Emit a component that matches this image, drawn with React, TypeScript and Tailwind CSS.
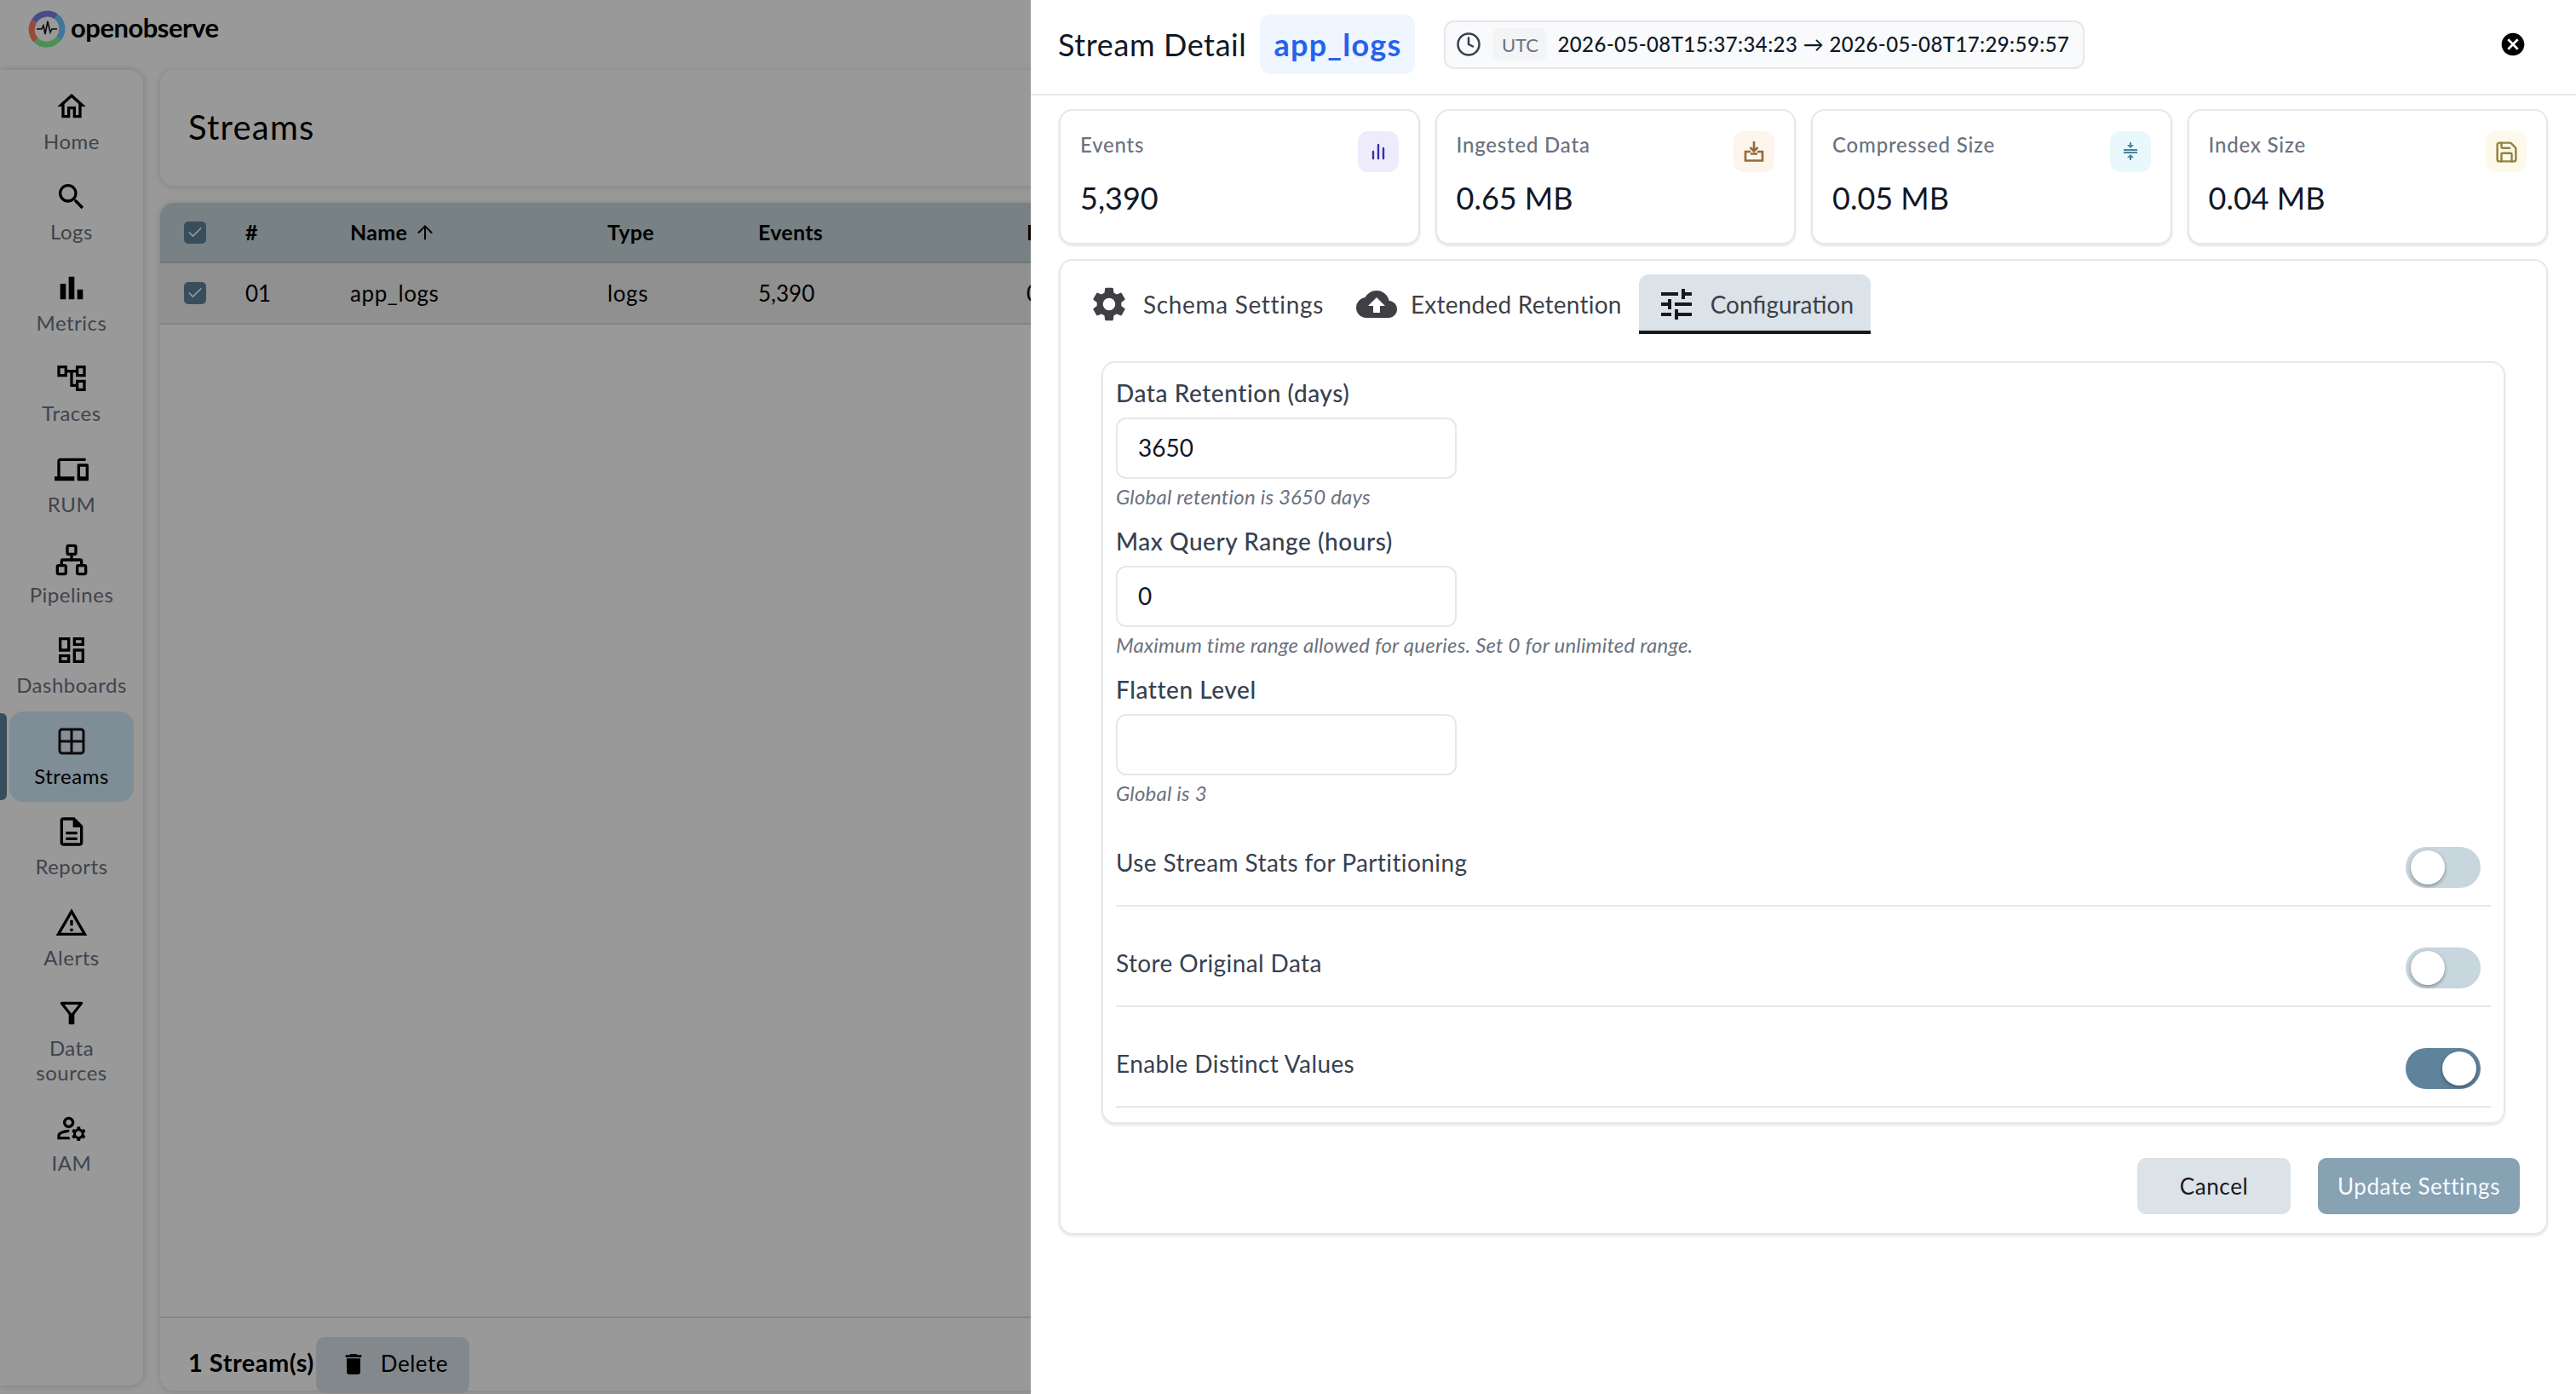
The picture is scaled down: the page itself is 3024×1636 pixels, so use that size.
import { ArrowUp, Check, Clock, Network, Save } from 'lucide-react'
import {
  MdBarChart,
  MdCancel,
  MdCloudUpload,
  MdCompress,
  MdDelete,
  MdOutlineAccountTree,
  MdOutlineDashboard,
  MdOutlineDescription,
  MdOutlineDevices,
  MdOutlineFilterAlt,
  MdOutlineHome,
  MdOutlineManageAccounts,
  MdOutlineWarningAmber,
  MdSearch,
  MdSettings,
  MdTune,
} from 'react-icons/md'
import type { ReactNode } from 'react'

function Logo() {
  return (
    <svg width="44" height="44" viewBox="0 0 44 44" fill="none">
      <circle cx="22" cy="22" r="20" fill="#fff" />
      <path d="M7 13 A18 18 0 0 1 33 7.5" stroke="#7a7de3" strokeWidth="7" />
      <path d="M33 7.5 A18 18 0 0 1 36 33" stroke="#69c6ff" strokeWidth="7" />
      <path d="M36 33 A18 18 0 0 1 9 35" stroke="#80ee8e" strokeWidth="7" />
      <path d="M9 35 A18 18 0 0 1 7 13" stroke="#ff7b63" strokeWidth="7" />
      <path d="M10 22h6l2-4 2 10 3-15 3 13 2-4h6" stroke="#111" strokeWidth="1.6" />
    </svg>
  )
}

function StreamsIcon() {
  return (
    <svg width="40" height="40" viewBox="0 0 40 40" fill="none">
      <rect x="6" y="6" width="28" height="28" rx="3" fill="#e5edff" stroke="#111" strokeWidth="3" />
      <path d="M20 6v28M6 20h28" stroke="#111" strokeWidth="3" />
    </svg>
  )
}

function TrayIcon() {
  return (
    <svg width="24" height="24" viewBox="0 0 24 24" fill="none" stroke="#94693d" strokeWidth="2.6">
      <path d="M12 0v11M7.5 7l4.5 4.5L16.5 7" />
      <path d="M8 12H2v10.5h20V12h-6M8 14.5h8" />
    </svg>
  )
}

function BarsIcon() {
  return (
    <svg width="16" height="20" viewBox="0 0 16 20" fill="none" stroke="#3730a3" strokeWidth="2.4" strokeLinecap="round">
      <path d="M2 18v-8M8 18V2M14 18V6" />
    </svg>
  )
}

const navItems: { label: ReactNode; icon: ReactNode; active?: boolean; tall?: boolean }[] = [
  { label: 'Home', icon: <MdOutlineHome size={40} /> },
  { label: 'Logs', icon: <MdSearch size={40} /> },
  { label: 'Metrics', icon: <MdBarChart size={40} /> },
  { label: 'Traces', icon: <MdOutlineAccountTree size={40} /> },
  { label: 'RUM', icon: <MdOutlineDevices size={40} /> },
  { label: 'Pipelines', icon: <Network size={40} strokeWidth={2} /> },
  { label: 'Dashboards', icon: <MdOutlineDashboard size={40} /> },
  { label: 'Streams', icon: <StreamsIcon />, active: true },
  { label: 'Reports', icon: <MdOutlineDescription size={40} /> },
  { label: 'Alerts', icon: <MdOutlineWarningAmber size={40} /> },
  { label: <>Data<br />sources</>, icon: <MdOutlineFilterAlt size={40} />, tall: true },
  { label: 'IAM', icon: <MdOutlineManageAccounts size={40} /> },
]

const stats = [
  { label: 'Events', value: '5,390', tile: 'bg-[#eeebfd]', icon: <BarsIcon /> },
  { label: 'Ingested Data', value: '0.65 MB', tile: 'bg-[#fdf5eb]', icon: <TrayIcon /> },
  { label: 'Compressed Size', value: '0.05 MB', tile: 'bg-[#e9f8fd]', icon: <MdCompress size={24} color="#4b8498" /> },
  { label: 'Index Size', value: '0.04 MB', tile: 'bg-[#fdfaeb]', icon: <Save size={29} color="#94803f" strokeWidth={2} /> },
]

const fields = [
  { label: 'Data Retention (days)', value: '3650', hint: 'Global retention is 3650 days' },
  { label: 'Max Query Range (hours)', value: '0', hint: 'Maximum time range allowed for queries. Set 0 for unlimited range.' },
  { label: 'Flatten Level', value: '', hint: 'Global is 3' },
]

const toggles = [
  { label: 'Use Stream Stats for Partitioning', on: false },
  { label: 'Store Original Data', on: false },
  { label: 'Enable Distinct Values', on: true },
]

function Checkbox() {
  return (
    <div className="flex h-[26px] w-[26px] items-center justify-center rounded-[5px] bg-[#5f839b]">
      <Check size={20} color="#fff" strokeWidth={2} />
    </div>
  )
}

function Toggle({ on }: { on: boolean }) {
  return (
    <div
      className={
        on
          ? 'flex h-[48px] w-[88px] items-center justify-end rounded-full bg-[#5f839b] px-[5px]'
          : 'flex h-[48px] w-[88px] items-center justify-start rounded-full bg-[#c8d6dd] px-[6px]'
      }
    >
      <div className="h-[40px] w-[40px] rounded-full bg-white shadow-[0_2px_4px_rgba(0,0,0,0.35)]" />
    </div>
  )
}

export default function App() {
  return (
    <div className="relative h-[1636px] w-[3024px] overflow-hidden bg-white font-['Lato',sans-serif] tracking-[0.5px] text-black">
      {/* page behind the drawer */}
      <div className="flex h-[82px] items-start pl-[33px] pt-[12px]">
        <Logo />
        <span className="ml-[6px] text-[31px] font-bold leading-[40px] tracking-[-0.5px]">openobserve</span>
      </div>

      <div className="flex items-start">
        <nav className="h-[1544px] w-[168px] shrink-0 rounded-r-2xl bg-white pt-[8px] shadow-[0_0_10px_rgba(0,0,0,0.2)]">
          {navItems.map((item, i) => (
            <div
              key={i}
              className={
                item.active
                  ? 'relative mx-[11px] flex h-[106.4px] flex-col items-center rounded-2xl bg-[#d2ecfa] pt-[15px] text-black'
                  : item.tall
                    ? 'mx-[11px] flex h-[135.4px] flex-col items-center pt-[15px] text-[#6b7280]'
                    : 'mx-[11px] flex h-[106.4px] flex-col items-center pt-[15px] text-[#6b7280]'
              }
            >
              {item.active && <div className="absolute bottom-[2px] left-[-11px] top-[2px] w-[8px] rounded-r-md bg-[#5f839b]" />}
              <div className="flex h-[40px] w-[40px] items-center justify-center text-black">{item.icon}</div>
              <div className="mt-[6px] whitespace-nowrap text-center text-[24px] leading-[29px]">{item.label}</div>
            </div>
          ))}
        </nav>

        <main className="ml-[20px] mr-[20px] flex h-[1550px] flex-1 flex-col gap-[20px]">
          <div className="h-[136px] rounded-2xl bg-white px-[33px] pt-[43px] text-[40px] leading-[48px] tracking-[1.2px] shadow-[0_1px_8px_rgba(0,0,0,0.15)]">
            Streams
          </div>
          <div className="flex flex-1 flex-col rounded-2xl bg-white shadow-[0_1px_8px_rgba(0,0,0,0.15)]">
            <div className="grid h-[71px] grid-cols-[72px_123px_302px_177px_315px_auto] items-center rounded-t-2xl border-b-2 border-[#b8c5cb] bg-[#c8d7dc] pl-[28px] text-[25px] font-bold tracking-[0.3px]">
              <Checkbox />
              <span>#</span>
              <span className="flex items-center gap-[8px]">Name <ArrowUp size={26} strokeWidth={1.8} /></span>
              <span>Type</span>
              <span>Events</span>
              <span>Ingested Data</span>
            </div>
            <div className="grid h-[72px] grid-cols-[72px_123px_302px_177px_315px_auto] items-center border-b-2 border-[#dcdcdc] bg-[#f0f0f0] pl-[28px] text-[26px] tracking-normal">
              <Checkbox />
              <span>01</span>
              <span className="tracking-[0.6px]">app_logs</span>
              <span className="tracking-[0.6px]">logs</span>
              <span>5,390</span>
              <span>0.65 MB</span>
            </div>
            <div className="flex-1" />
            <div className="flex h-[87px] items-start border-t-2 border-[#e0e0e0] pl-[33px] pt-[22px]">
              <span className="mt-[12px] text-[29px] font-bold leading-[36px]">1 Stream(s)</span>
              <div className="ml-[2px] flex h-[66px] w-[180px] items-center rounded-[10px] bg-[#d9e3ea] pb-[3px] pl-[28px] text-[26px]">
                <MdDelete size={32} />
                <span className="ml-[16px]">Delete</span>
              </div>
            </div>
          </div>
        </main>
      </div>

      {/* dimmed backdrop and drawer */}
      <div className="absolute inset-0 bg-black/40" />
      <aside className="absolute bottom-0 right-0 top-0 flex w-[1814px] flex-col bg-white">
        <header className="flex h-[112px] shrink-0 items-center border-b-2 border-[#e5e7eb] pb-[6px] pl-[32px] pr-[58px]">
          <span className="text-[36px] leading-[44px] tracking-[0.6px] text-[#111827]">Stream Detail</span>
          <span className="ml-[16px] flex h-[70px] w-[182px] items-center justify-center rounded-xl bg-[#eff6ff] text-[36px] font-bold tracking-[1.2px] text-[#2563eb]">
            app_logs
          </span>
          <div className="ml-[34px] flex h-[57px] w-[752px] items-center rounded-xl border-2 border-[#e5e7eb] bg-[#f9fafb] pl-[12px]">
            <Clock size={30} color="#374151" strokeWidth={2} />
            <span className="ml-[13px] flex h-[38px] w-[64px] items-center justify-center rounded-lg bg-[#f3f4f6] text-[22px] tracking-normal text-[#6b7280]">
              UTC
            </span>
            <span className="ml-[12px] whitespace-nowrap text-[24px] font-medium tracking-[0.4px] text-[#111827]">
              2026-05-08T15:37:34:23 → 2026-05-08T17:29:59:57
            </span>
          </div>
          <MdCancel size={32} className="ml-auto" />
        </header>

        <div className="px-[33px] pt-[16px]">
          <div className="grid grid-cols-4 gap-[18px]">
            {stats.map(stat => (
              <div
                key={stat.label}
                className="h-[159px] rounded-2xl border-2 border-[#e5e7eb] bg-white px-[23px] pt-[24px] shadow-[0_2px_3px_rgba(0,0,0,0.1)]"
              >
                <div className="flex h-[48px] items-start justify-between">
                  <span className="text-[24px] font-medium leading-[32px] tracking-[0.8px] text-[#6b7280]">{stat.label}</span>
                  <div className={`flex h-[48px] w-[48px] items-center justify-center rounded-xl ${stat.tile}`}>{stat.icon}</div>
                </div>
                <div className="mt-[10px] text-[36px] leading-[40px] tracking-normal text-[#111827]">{stat.value}</div>
              </div>
            ))}
          </div>

          <section className="mt-[17px] rounded-2xl border-2 border-[#e5e7eb] bg-white pb-[22px] shadow-[0_2px_3px_rgba(0,0,0,0.1)]">
            <div className="flex pl-[13px] pt-[16px] text-[28px] text-[#3f3f46]">
              <div className="flex h-[70px] items-center gap-[16px] px-[20px] tracking-[0.67px]">
                <MdSettings size={48} />
                <span>Schema Settings</span>
              </div>
              <div className="ml-[-2px] flex h-[70px] items-center gap-[16px] px-[20px] tracking-[0.23px]">
                <MdCloudUpload size={48} />
                <span>Extended Retention</span>
              </div>
              <div className="flex h-[70px] items-center gap-[16px] rounded-t-xl bg-[#dbe2e8] px-[20px] tracking-normal shadow-[inset_0_-4px_0_#18181b]">
                <MdTune size={48} color="#18181b" />
                <span>Configuration</span>
              </div>
            </div>

            <div className="mx-[48px] mt-[32px] rounded-2xl border-2 border-[#e5e7eb] px-[15px] pb-[17px] pt-[18px] shadow-[0_2px_3px_rgba(0,0,0,0.1)]">
              <div className="mb-[-2px] flex flex-col gap-[18px]">
                {fields.map(field => (
                  <div key={field.label}>
                    <div className="h-[38px] text-[28px] font-medium leading-[34px] tracking-[0.55px] text-[#374151]">{field.label}</div>
                    <input
                      readOnly
                      value={field.value}
                      className="mt-[8px] block h-[72px] w-[400px] rounded-xl border-2 border-[#e5e7eb] px-[24px] pb-[2px] text-[28px] tracking-normal text-[#111827] outline-none"
                    />
                    <div className="mt-[8px] h-[30px] text-[24px] italic leading-[26px] tracking-[0.2px] text-[#6b7280]">{field.hint}</div>
                  </div>
                ))}
              </div>
              {toggles.map(row => (
                <div key={row.label} className="flex h-[118px] items-start justify-between border-b-2 border-[#e5e7eb] pr-[12px] pt-[48px]">
                  <span className="text-[28px] leading-[36px] tracking-[0.4px] text-[#374151]">{row.label}</span>
                  <Toggle on={row.on} />
                </div>
              ))}
            </div>

            <div className="mr-[31px] mt-[40px] flex justify-end gap-[32px] text-[26px] tracking-[0.6px]">
              <div className="flex h-[66px] w-[180px] items-center justify-center rounded-[10px] bg-[#dbe2e8] text-[#18181b]">Cancel</div>
              <div className="flex h-[66px] w-[237px] items-center justify-center rounded-[10px] bg-[#86a2b3] text-[#f8fafc]">Update Settings</div>
            </div>
          </section>
        </div>
      </aside>
    </div>
  )
}
